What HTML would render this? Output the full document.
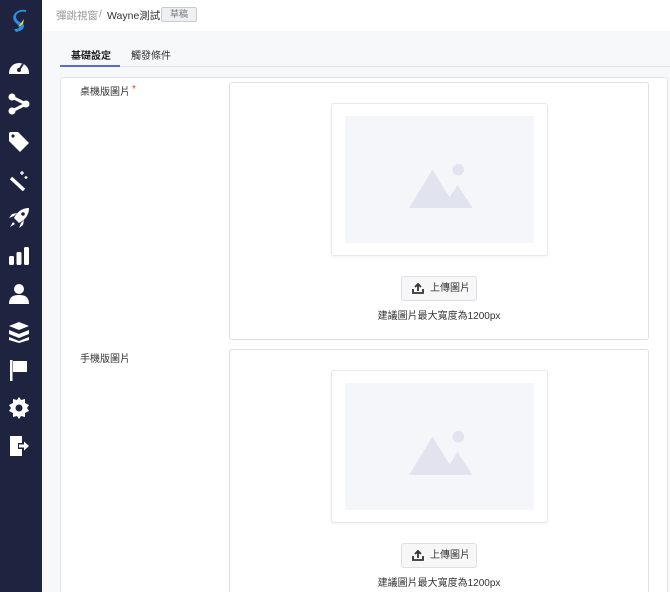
<!DOCTYPE html>
<html style="width:670px;height:592px;overflow:hidden"><head><meta charset="utf-8">
<style>
*{margin:0;padding:0;box-sizing:border-box}
html,body{width:670px;height:592px;overflow:hidden}
body{background:#f7f8fa;font-family:"Liberation Sans","Noto Sans CJK TC",sans-serif;position:relative}
.side{position:absolute;left:0;top:0;width:42px;height:592px;background:#1e2340}
.ic{position:absolute;left:8px;width:22px;height:22px}
.hdr{position:absolute;left:42px;top:0;right:0;height:31px;background:#fff;font-size:11px;color:#333}
.a{position:absolute;font-size:10px}
.card{position:absolute;left:60px;top:77px;width:608px;height:515px;background:#fff;border:1px solid #e2e4e8;border-bottom:none;border-radius:3px 3px 0 0}
.box{position:absolute;left:229px;width:420px;background:#fff;border:1px solid #dcdfe5;border-radius:3px}
.pv{position:absolute;left:101px;width:217px;height:153px;border:1px solid #e6e8ec;border-radius:3px;box-shadow:0 1px 2px rgba(0,0,0,.05)}
.pv .in{position:absolute;left:13px;top:12px;width:189px;height:127px;background:#f5f6fa;border-radius:2px}
.btn{position:absolute;left:171px;width:76px;height:25px;border:1px solid #dcdfe5;border-radius:3px;background:#f7f7f8;font-size:10px;color:#333;line-height:23px;padding-left:28px}
.tip{position:absolute;left:0;width:418px;text-align:center;font-size:10px;color:#333}
.lbl{position:absolute;left:80px;font-size:10px;color:#333}
</style></head><body>
<div class="side">
<svg style="position:absolute;left:10px;top:9px" width="22" height="26" viewBox="0 0 22 26"><path d="M16 3 C8 1 3 7 8 12 L13 15 C16 18 12 22 6 23 L4 20 C9 20 11 18 8 16 L5 13 C0 8 6 -1 16 1Z" fill="#2d8ee0"/><path d="M14 10 L8 18 L13 15Z" fill="#e8d93a"/></svg>
<svg class="ic" style="top:55px" viewBox="0 0 22 22"><path d="M1 18 A10 10 0 0 1 21 18 L21 19 L1 19Z" fill="#fff"/><circle cx="11" cy="15" r="2" fill="#1e2340"/><path d="M11 15 L15 9" stroke="#1e2340" stroke-width="2"/></svg>
<svg class="ic" style="top:93px" viewBox="0 0 22 22" fill="#fff"><circle cx="4" cy="4" r="3.5"/><circle cx="4" cy="18" r="3.5"/><circle cx="18" cy="11" r="3.5"/><path d="M4 4 L18 11 L4 18" stroke="#fff" stroke-width="3" fill="none"/></svg>
<svg class="ic" style="top:131px" viewBox="0 0 22 22"><path d="M1 2 L1 10 L12 21 L21 12 L10 1 L2 1Z" fill="#fff"/><circle cx="5" cy="5" r="1.6" fill="#1e2340"/></svg>
<svg class="ic" style="top:169px" viewBox="0 0 22 22"><path d="M3 9 L16 21" stroke="#fff" stroke-width="3.5"/><path d="M14 2 v4 M12 4 h4 M18 7 v3 M16.5 8.5 h3" stroke="#fff" stroke-width="1.3"/></svg>
<svg class="ic" style="top:207px" viewBox="0 0 22 22" fill="#fff"><path d="M21 1 C14 1 9 5 6 11 L11 16 C17 13 21 8 21 1Z"/><path d="M6 9 L1 11 L4 7 L9 6Z M13 16 L11 21 L15 18 L16 13Z M5 15 L2 20 L7 17Z"/><circle cx="15" cy="7" r="1.8" fill="#1e2340"/></svg>
<svg class="ic" style="top:245px" viewBox="0 0 22 22" fill="#fff"><rect x="1" y="11" width="5" height="9" rx="1.5"/><rect x="8.5" y="7" width="5" height="13" rx="1.5"/><rect x="16" y="2" width="5" height="18" rx="1.5"/></svg>
<svg class="ic" style="top:283px" viewBox="0 0 22 22" fill="#fff"><circle cx="11" cy="6" r="5"/><path d="M1 21 C1 14 5 12 11 12 C17 12 21 14 21 21Z"/></svg>
<svg class="ic" style="top:321px" viewBox="0 0 22 22" fill="#fff"><path d="M1 5 L11 1 L21 5 L11 9Z M1 9 L11 13 L21 9 L21 13 L11 17 L1 13Z M1 16 L11 20 L21 16 L21 19 L11 22 L1 19Z"/></svg>
<svg class="ic" style="top:359px" viewBox="0 0 22 22" fill="#fff"><rect x="2" y="1" width="2.5" height="21"/><path d="M5 2 L19 2 L19 13 L5 13Z"/></svg>
<svg class="ic" style="top:397px" viewBox="0 0 22 22"><path d="M11 0 L13 3 L17 2 L17 6 L21 8 L19 11 L21 14 L17 16 L17 20 L13 19 L11 22 L9 19 L5 20 L5 16 L1 14 L3 11 L1 8 L5 6 L5 2 L9 3Z" fill="#fff"/><circle cx="11" cy="11" r="3.5" fill="#1e2340"/></svg>
<svg class="ic" style="top:435px" viewBox="0 0 22 22" fill="#fff"><path d="M2 1 L14 1 L14 8 L10 8 L10 14 L14 14 L14 21 L2 21Z"/><path d="M11 9.5 L16 9.5 L16 6.5 L21 11 L16 15.5 L16 12.5 L11 12.5Z"/></svg>
</div>
<div class="hdr">
<span class="a" style="left:14px;top:8px;color:#999;font-size:10.5px">彈跳視窗</span>
<span class="a" style="left:57px;top:8px;color:#999;font-size:10.5px">/</span>
<span class="a" style="left:65px;top:8px;color:#333;font-size:10.5px">Wayne測試</span>
<span class="a" style="left:119px;top:7px;width:36px;height:15px;border:1px solid #c8ccd2;border-radius:2px;background:#eef0f2;color:#777;font-size:9px;text-align:center;line-height:13px">草稿</span>
</div>
<span class="a" style="left:71px;top:47px;color:#222;font-weight:bold">基礎設定</span>
<span class="a" style="left:131px;top:47px;color:#333">觸發條件</span>
<div style="position:absolute;left:60px;top:66px;width:610px;height:1px;background:#dfe1e5"></div>
<div style="position:absolute;left:60px;top:65px;width:60px;height:2px;background:#5b6bd2"></div>
<div class="card"></div>
<div class="lbl" style="top:83px">桌機版圖片<span style="color:#e33;position:relative;top:-3px;margin-left:2px">*</span></div>
<div class="lbl" style="top:350px">手機版圖片</div>

<div class="box" style="top:82px;height:258px">
<div class="pv" style="top:20px"><div class="in"></div>
<svg style="position:absolute;left:75px;top:57px" width="68" height="48" viewBox="406 158 68 50"><path d="M407 207 L431 167 L449 196 L457 183 L473 207Z" fill="#e1e3ee"/><circle cx="458" cy="167" r="6" fill="#e1e3ee"/></svg></div>
<div class="btn" style="top:193px"><svg style="position:absolute;left:10px;top:6px" width="12" height="11" viewBox="0 0 12 11"><path d="M1 6 V10 H11 V6" stroke="#333" stroke-width="1.8" fill="none"/><path d="M6 8 V2 M3 4 L6 1 L9 4" stroke="#333" stroke-width="1.8" fill="none"/></svg>上傳圖片</div>
<div class="tip" style="top:224px">建議圖片最大寬度為1200px</div>
</div>

<div class="box" style="top:349px;height:243px;border-bottom:none;border-radius:3px 3px 0 0">
<div class="pv" style="top:20px"><div class="in"></div>
<svg style="position:absolute;left:75px;top:57px" width="68" height="48" viewBox="406 158 68 50"><path d="M407 207 L431 167 L449 196 L457 183 L473 207Z" fill="#e1e3ee"/><circle cx="458" cy="167" r="6" fill="#e1e3ee"/></svg></div>
<div class="btn" style="top:193px"><svg style="position:absolute;left:10px;top:6px" width="12" height="11" viewBox="0 0 12 11"><path d="M1 6 V10 H11 V6" stroke="#333" stroke-width="1.8" fill="none"/><path d="M6 8 V2 M3 4 L6 1 L9 4" stroke="#333" stroke-width="1.8" fill="none"/></svg>上傳圖片</div>
<div class="tip" style="top:224px">建議圖片最大寬度為1200px</div>
</div>
</body></html>
